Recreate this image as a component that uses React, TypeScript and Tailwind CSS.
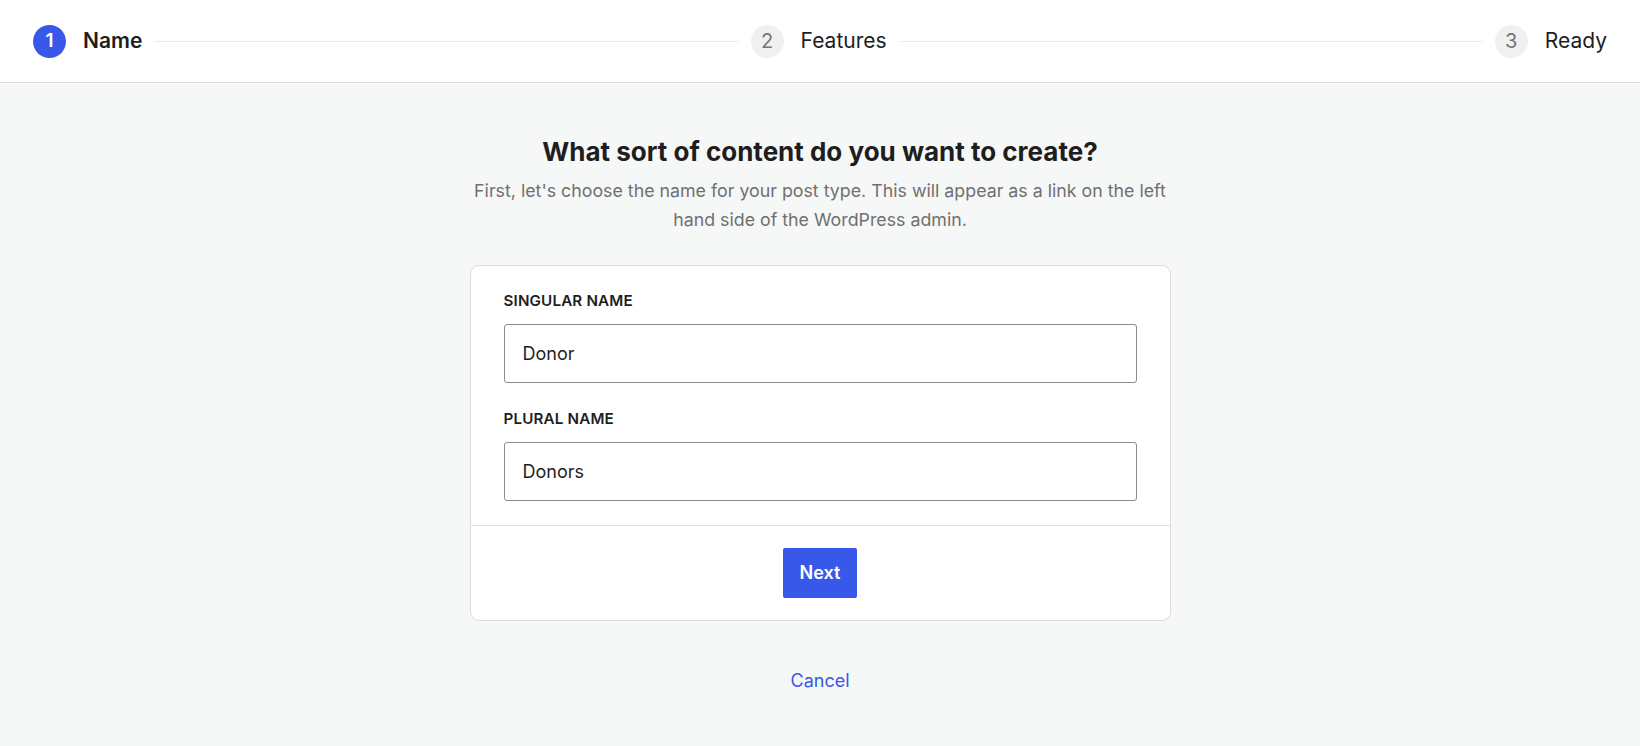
import type { ReactNode } from 'react';

interface Step {
  num: number;
  label: string;
  active?: boolean;
}

const steps: Step[] = [
  { num: 1, label: 'Name', active: true },
  { num: 2, label: 'Features' },
  { num: 3, label: 'Ready' },
];

function StepItem({ step }: { step: Step }) {
  return (
    <div className="flex shrink-0 items-center gap-[17px]">
      <span
        className={
          step.active
            ? 'flex h-[33px] w-[33px] items-center justify-center rounded-full bg-[#3858e9] text-[19px] font-semibold text-white'
            : 'flex h-[33px] w-[33px] items-center justify-center rounded-full bg-[#f0f0f0] text-[20px] text-[#757575]'
        }
      >
        {step.num}
      </span>
      <span
        className={
          step.active
            ? 'text-[21px] font-semibold text-[#1e1e1e]'
            : 'text-[21px] text-[#1e1e1e]'
        }
      >
        {step.label}
      </span>
    </div>
  );
}

function Field({ label, value }: { label: string; value: string }) {
  return (
    <label className="flex flex-col">
      <span className="text-[15.2px] font-semibold uppercase tracking-[0.01em] text-[#1e1e1e]">
        {label}
      </span>
      <input
        readOnly
        value={value}
        className="mt-[11px] h-[59px] w-full rounded-[3px] border border-[#8c8c8c] bg-white px-[18px] text-[18px] text-[#1e1e1e] outline-none"
      />
    </label>
  );
}

function Card({ children, footer }: { children: ReactNode; footer: ReactNode }) {
  return (
    <section className="w-[701px] rounded-[9px] border border-[#dcdcde] bg-white">
      <div className="flex flex-col gap-[25px] px-[33px] pt-[24px] pb-[24px]">{children}</div>
      <div className="flex justify-center border-t border-[#e0e0e0] py-[22px]">{footer}</div>
    </section>
  );
}

export default function App() {
  return (
    <div
      className="min-h-[746px] bg-[#f6f7f7]"
      style={{ fontFamily: 'Inter, "Noto Sans", "Liberation Sans", sans-serif' }}
    >
      <header className="flex h-[83px] items-center gap-[12px] border-b border-[#dcdcde] bg-white px-[33px]">
        <StepItem step={steps[0]} />
        <div className="h-px flex-1 bg-[#ececec]" />
        <StepItem step={steps[1]} />
        <div className="h-px flex-1 bg-[#ececec]" />
        <StepItem step={steps[2]} />
      </header>

      <main className="flex flex-col items-center pt-[51px]">
        <h1 className="text-[26px] font-bold leading-[36px] text-[#1e1e1e]">
          What sort of content do you want to create?
        </h1>
        <p className="mt-[6px] w-[710px] text-center text-[17.8px] leading-[29px] text-[#707070]">
          First, let&apos;s choose the name for your post type. This will appear as a link on the left
          hand side of the WordPress admin.
        </p>

        <div className="mt-[31px]">
          <Card
            footer={
              <button className="h-[50px] rounded-[2px] bg-[#3858e9] px-[17px] text-[18px] font-semibold text-white">
                Next
              </button>
            }
          >
            <Field label="Singular name" value="Donor" />
            <Field label="Plural name" value="Donors" />
          </Card>
        </div>

        <button className="mt-[46px] text-[18px] text-[#3858e9]">Cancel</button>
      </main>
    </div>
  );
}
